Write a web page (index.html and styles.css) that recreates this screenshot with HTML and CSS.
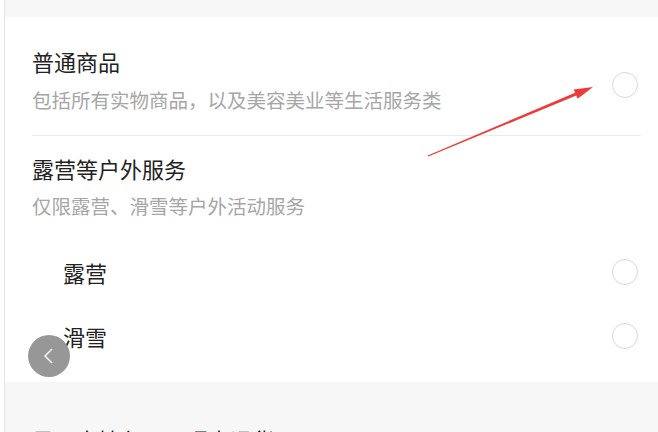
FILE: index.html
```html
<!DOCTYPE html>
<html lang="zh-CN">
<head>
    <meta charset="UTF-8">
    <meta name="viewport" content="width=device-width, initial-scale=1.0">
    <title>选择类型</title>
    <link rel="stylesheet" href="styles.css">
</head>
<body>

    <div class="page">

        <div class="gap-top"></div>

        <div class="card">
            <div class="option">
                <div class="option-text">
                    <div class="title">普通商品</div>
                    <div class="desc">包括所有实物商品，以及美容美业等生活服务类</div>
                </div>
                <span class="radio"></span>
            </div>

            <div class="divider"></div>

            <div class="group">
                <div class="title">露营等户外服务</div>
                <div class="desc">仅限露营、滑雪等户外活动服务</div>
            </div>

            <ul class="sub-list">
                <li>
                    <span class="sub-name">露营</span>
                    <span class="radio"></span>
                </li>
                <li>
                    <span class="sub-name">滑雪</span>
                    <span class="radio"></span>
                </li>
            </ul>
        </div>

        <div class="section">
            <div class="section-title">是否支持七天无理由退货</div>
        </div>

        <!-- 返回按钮 -->
        <div class="back">
            <svg width="14" height="18" viewBox="0 0 14 18">
                <path d="M10 2 L3 9 L10 16" fill="none" stroke="#fff" stroke-width="1.4"/>
            </svg>
        </div>

        <!-- 标注箭头 -->
        <svg class="mark" width="658" height="432" viewBox="0 0 658 432">
            <polygon fill="#f03a3a"
                     points="428.2,156.5 576.3,95.6 577.6,98.8 593,87 573.8,89.6 575.1,92.8 427.8,155.5"/>
        </svg>

    </div>

</body>
</html>
```

FILE: styles.css
```css
body, div, ul, li {
  margin: 0;
  padding: 0;
}

ul {
  list-style-type: none;
}

body {
  background: #fff;
  font-family: "Noto Sans CJK SC", "Noto Sans", sans-serif;
  overflow: hidden;
}

.page {
  position: relative;
  height: 432px;
  margin-left: 4px;
  border-left: 1px solid #e6e6e6;
  background: #f7f7f7;
  overflow: hidden;
}

.gap-top {
  height: 17px;
}

.card {
  background: #fff;
  padding: 29px 0 14px 27px;
}

.option {
  display: flex;
  align-items: center;
  padding-right: 20px;
}

.option-text {
  flex: 1;
}

.title {
  font-size: 22px;
  line-height: 30px;
  color: #222;
}

.desc {
  margin-top: 10px;
  font-size: 19.5px;
  line-height: 28px;
  color: #a6a6a6;
}

.group .desc {
  margin-top: 9px;
}

.option .radio {
  margin-top: 10px;
}

.radio {
  width: 24px;
  height: 24px;
  border: 1.6px solid #d9d9d9;
  border-radius: 50%;
}

.divider {
  height: 1px;
  margin: 21px 17px 17px 0;
  background: #ebebeb;
}

.sub-list {
  margin-top: 20px;
  padding-right: 20px;
}

.sub-list li {
  display: flex;
  align-items: center;
  justify-content: space-between;
  height: 64px;
  padding-left: 31px;
}

.sub-name {
  font-size: 22px;
  line-height: 30px;
  color: #222;
}

.section {
  padding: 42px 0 0 27px;
}

.section-title {
  font-size: 22px;
  line-height: 30px;
  color: #222;
}

.back {
  position: absolute;
  left: 23px;
  top: 335px;
  width: 42px;
  height: 42px;
  border-radius: 50%;
  background: #979797;
  display: flex;
  align-items: center;
  justify-content: center;
}

.mark {
  position: absolute;
  left: -5px;
  top: 0;
  pointer-events: none;
}
```
